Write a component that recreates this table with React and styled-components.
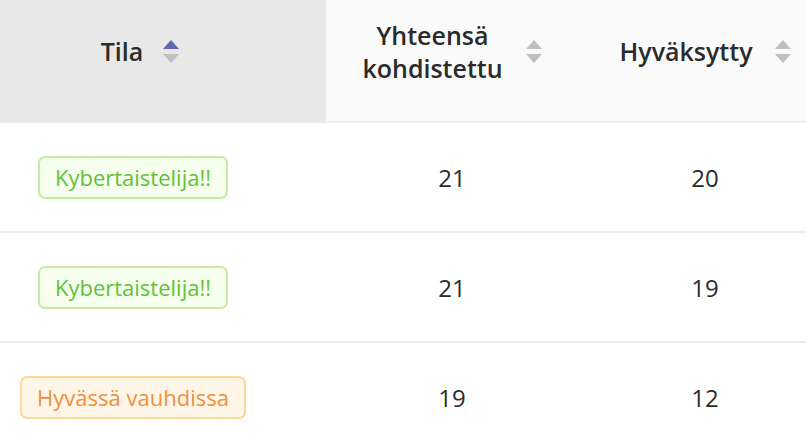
import React from "react";
import styled, { createGlobalStyle } from "styled-components";

const Global = createGlobalStyle`
  html, body { margin: 0; padding: 0; background: #ffffff; overflow: hidden; }
  body { font-family: "Open Sans", "Noto Sans", sans-serif; }
`;

const Table = styled.div`
  width: 832px;
  display: grid;
  grid-template-columns: 326px 252px 254px;
  color: #2b2b2b;
`;

const HeadCell = styled.div`
  box-sizing: border-box;
  height: 123px;
  border-bottom: 2px solid #ececec;
  background: ${(p) => (p.$sorted ? "#e8e8e8" : "#fafafa")};
  display: flex;
  align-items: center;
  justify-content: center;
  gap: ${(p) => p.$gap}px;
  padding-right: ${(p) => p.$shift || 0}px;
  padding-bottom: 18px;
`;

const HeadTitle = styled.div`
  font-size: 25px;
  font-weight: 600;
  line-height: 33px;
  text-align: center;
  color: #2b2b2b;
`;

const Sorter = styled.div`
  display: flex;
  flex-direction: column;
  gap: 5px;
`;

const Tri = styled.svg`
  display: block;
  width: 16px;
  height: 9px;
`;

const Cell = styled.div`
  box-sizing: border-box;
  height: 110px;
  border-bottom: 2px solid #ebebeb;
  display: flex;
  align-items: center;
  justify-content: center;
  padding-right: ${(p) => p.$shift || 0}px;
  font-size: 24px;
  color: #2b2b2b;
`;

const Tag = styled.span`
  display: inline-flex;
  align-items: center;
  height: 43px;
  box-sizing: border-box;
  padding: 0 15px;
  border-radius: 7px;
  border: 2px solid ${(p) => (p.$tone === "green" ? "#c5ec9f" : "#fbd89b")};
  background: ${(p) => (p.$tone === "green" ? "#f6ffed" : "#fff6e8")};
  color: ${(p) => (p.$tone === "green" ? "#62c13a" : "#f0903a")};
  font-size: 22px;
`;

function SortIcon({ active }) {
  return (
    <Sorter>
      <Tri viewBox="0 0 16 9">
        <polygon points="8,0 16,9 0,9" fill={active ? "#6466ab" : "#bfbfbf"} />
      </Tri>
      <Tri viewBox="0 0 16 9">
        <polygon points="0,0 16,0 8,9" fill="#bfbfbf" />
      </Tri>
    </Sorter>
  );
}

const rows = [
  { tag: "Kybertaistelija!!", tone: "green", total: 21, ok: 20 },
  { tag: "Kybertaistelija!!", tone: "green", total: 21, ok: 19 },
  { tag: "Hyvässä vauhdissa", tone: "orange", total: 19, ok: 12 },
];

export default function App() {
  return (
    <>
      <Global />
      <Table>
        <HeadCell $sorted $gap={20} $shift={46}>
          <HeadTitle>Tila</HeadTitle>
          <SortIcon active />
        </HeadCell>
        <HeadCell $gap={23}>
          <HeadTitle>
            Yhteensä
            <br />
            kohdistettu
          </HeadTitle>
          <SortIcon />
        </HeadCell>
        <HeadCell $gap={22}>
          <HeadTitle>Hyväksytty</HeadTitle>
          <SortIcon />
        </HeadCell>
        {rows.map((r, i) => (
          <React.Fragment key={i}>
            <Cell $shift={60}>
              <Tag $tone={r.tone}>{r.tag}</Tag>
            </Cell>
            <Cell>{r.total}</Cell>
            <Cell>{r.ok}</Cell>
          </React.Fragment>
        ))}
      </Table>
    </>
  );
}
